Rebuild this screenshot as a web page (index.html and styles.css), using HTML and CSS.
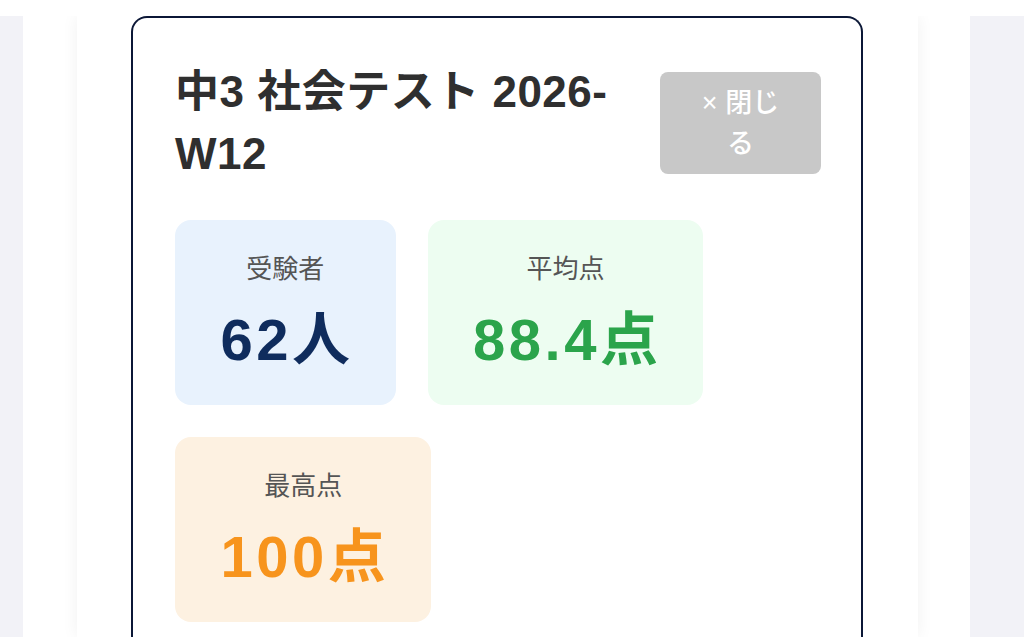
FILE: index.html
```html
<!DOCTYPE html>
<html lang="ja">
<head>
<meta charset="utf-8">
<title>中3 社会テスト</title>
<link rel="stylesheet" href="styles.css">
</head>
<body>
<div class="page">
  <div class="side side-left"></div>
  <div class="outer">
    <div class="panel">
      <div class="card">
        <div class="card-head">
          <h1 class="title">中3 社会テスト 2026-W12</h1>
          <button class="close-btn">× 閉じる</button>
        </div>
        <div class="stats">
          <div class="stat stat-blue">
            <div class="stat-label">受験者</div>
            <div class="stat-value">62人</div>
          </div>
          <div class="stat stat-green">
            <div class="stat-label">平均点</div>
            <div class="stat-value">88.4点</div>
          </div>
          <div class="stat stat-orange">
            <div class="stat-label">最高点</div>
            <div class="stat-value">100点</div>
          </div>
        </div>
      </div>
    </div>
  </div>
  <div class="side side-right"></div>
</div>
</body>
</html>
```
FILE: styles.css
```css
* { box-sizing: border-box; }
html, body { margin: 0; padding: 0; background: #ffffff; }
body {
  font-family: "Liberation Sans", "Noto Sans CJK JP", sans-serif;
  width: 1024px;
  height: 637px;
  overflow: hidden;
}
.page {
  margin-top: 16px;
  display: flex;
  height: 621px;
  overflow: hidden;
}
.side { background: #f2f2f7; }
.side-left { width: 23px; flex: none; }
.side-right { flex: 1; }
.outer {
  width: 947px;
  flex: none;
  background: #ffffff;
  padding: 0 52px 0 54px;
  display: flex;
}
.panel {
  flex: 1;
  background: #ffffff;
  box-shadow: 0 0 16px rgba(0, 0, 0, 0.06);
  padding: 0 55px 0 54px;
  display: flex;
}
.card {
  flex: 1;
  border: 2.5px solid #0b1736;
  border-bottom: none;
  border-radius: 16px 16px 0 0;
  padding: 43px 40px 0 42px;
}
.card-head {
  display: flex;
  align-items: center;
  gap: 24px;
}
.title {
  flex: 1;
  margin: 0;
  font-size: 44px;
  line-height: 62px;
  font-weight: 700;
  color: #2f2f2f;
  letter-spacing: 0.5px;
}
.close-btn {
  width: 161px;
  flex: none;
  border: none;
  border-radius: 8px;
  background: #c8c8c8;
  color: #ffffff;
  font-family: inherit;
  font-size: 27px;
  font-weight: 500;
  line-height: 40.5px;
  padding: 11px 30px 10px;
  text-align: center;
}
.stats {
  margin-top: 35px;
  display: flex;
  flex-wrap: wrap;
  gap: 32px;
  width: 560px;
}
.stat {
  border-radius: 16px;
  padding: 30px 42px;
  text-align: center;
}
.stat-label {
  font-size: 26px;
  line-height: 39px;
  color: #555555;
}
.stat-value {
  margin-top: 16px;
  font-size: 58px;
  line-height: 70px;
  font-weight: 700;
  letter-spacing: 3.5px;
  text-indent: 3.5px;
}
.stat-blue { background: #e8f2fd; }
.stat-blue .stat-value { color: #0f2c5d; }
.stat-green { background: #edfdf1; }
.stat-green .stat-value { color: #2ba44b; }
.stat-orange { background: #fdf1e1; }
.stat-orange .stat-value { color: #f7941d; }
```
